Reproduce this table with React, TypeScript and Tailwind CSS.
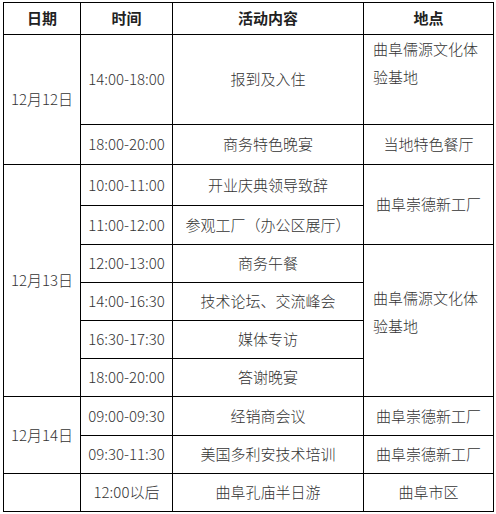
const font = { fontFamily: '"Noto Sans CJK SC", "Liberation Sans", sans-serif' };

function Cell({ children, className = '' }: { children?: React.ReactNode; className?: string }) {
  return (
    <div className={`bg-white flex items-center justify-center text-center ${className}`}>
      {children}
    </div>
  );
}

export default function App() {
  return (
    <div className="w-[496px] h-[514px] bg-white pt-[2px] pl-[3px] text-[15px] font-light text-[#333]" style={font}>
      <div className="inline-grid grid-cols-[76px_91px_190px_129px] grid-rows-[31px_89px_39px_40px_38px_37px_37px_37px_37px_38px_37px_37px] gap-px p-px bg-black">
        <Cell className="font-bold text-[#222]">日期</Cell>
        <Cell className="font-bold text-[#222]">时间</Cell>
        <Cell className="font-bold text-[#222]">活动内容</Cell>
        <Cell className="font-bold text-[#222]">地点</Cell>

        <Cell className="row-span-2">12月12日</Cell>
        <Cell>14:00-18:00</Cell>
        <Cell>报到及入住</Cell>
        <Cell className="!items-start !justify-start text-left pl-[9px] pr-[6px] leading-[28px]">
          曲阜儒源文化体验基地
        </Cell>
        <Cell>18:00-20:00</Cell>
        <Cell>商务特色晚宴</Cell>
        <Cell>当地特色餐厅</Cell>

        <Cell className="row-span-6">12月13日</Cell>
        <Cell>10:00-11:00</Cell>
        <Cell>开业庆典领导致辞</Cell>
        <Cell className="row-span-2">曲阜崇德新工厂</Cell>
        <Cell>11:00-12:00</Cell>
        <Cell>参观工厂（办公区展厅）</Cell>
        <Cell>12:00-13:00</Cell>
        <Cell>商务午餐</Cell>
        <Cell className="row-span-4 !items-start !justify-start text-left pl-[9px] pr-[6px] pt-[39px] leading-[28px]">
          曲阜儒源文化体验基地
        </Cell>
        <Cell>14:00-16:30</Cell>
        <Cell>技术论坛、交流峰会</Cell>
        <Cell>16:30-17:30</Cell>
        <Cell>媒体专访</Cell>
        <Cell>18:00-20:00</Cell>
        <Cell>答谢晚宴</Cell>

        <Cell className="row-span-2">12月14日</Cell>
        <Cell>09:00-09:30</Cell>
        <Cell>经销商会议</Cell>
        <Cell>曲阜崇德新工厂</Cell>
        <Cell>09:30-11:30</Cell>
        <Cell>美国多利安技术培训</Cell>
        <Cell>曲阜崇德新工厂</Cell>

        <Cell />
        <Cell>12:00以后</Cell>
        <Cell>曲阜孔庙半日游</Cell>
        <Cell>曲阜市区</Cell>
      </div>
    </div>
  );
}
